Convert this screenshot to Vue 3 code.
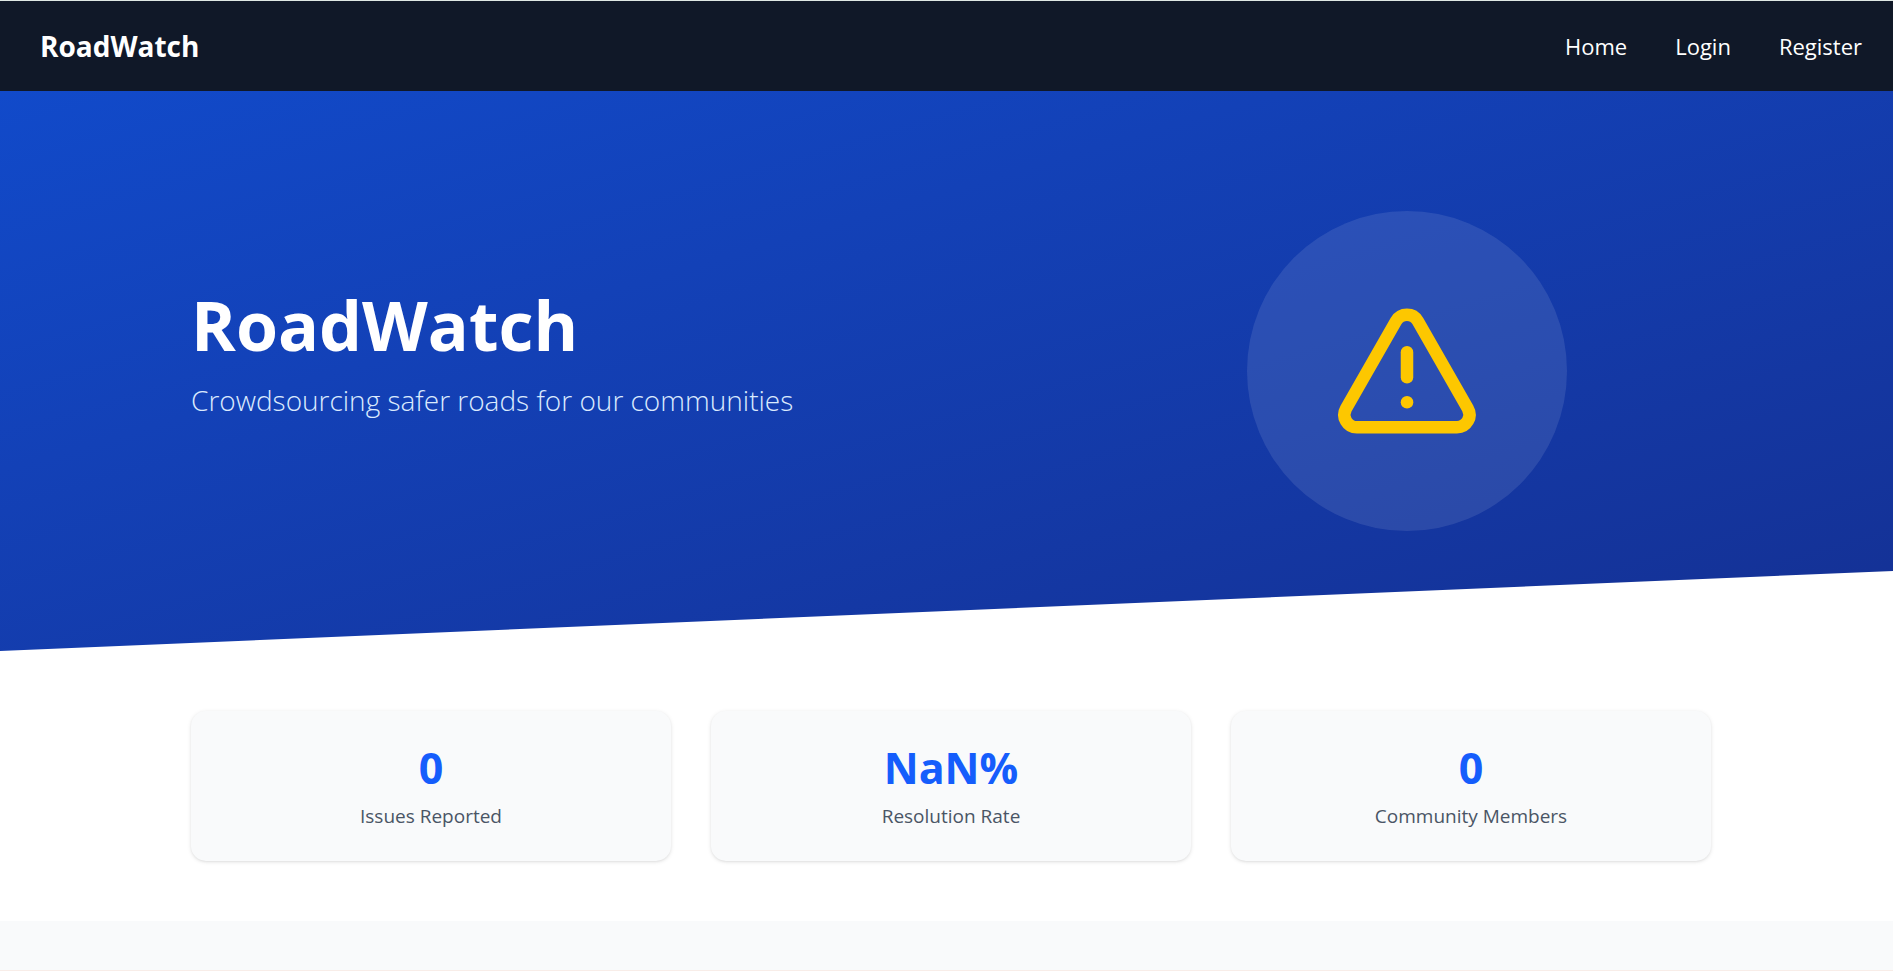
<script setup>
const links = [
  { label: 'Home', href: '#home' },
  { label: 'Login', href: '#login' },
  { label: 'Register', href: '#register' },
]

const stats = [
  { value: '0', label: 'Issues Reported' },
  { value: 'NaN%', label: 'Resolution Rate' },
  { value: '0', label: 'Community Members' },
]
</script>

<template>
  <div class="page">
    <header class="navbar">
      <a class="brand" href="#home">RoadWatch</a>
      <nav class="links">
        <a v-for="link in links" :key="link.label" :href="link.href">{{ link.label }}</a>
      </nav>
    </header>

    <main>
      <section class="hero">
        <div class="container hero-row">
          <div class="intro">
            <h1>RoadWatch</h1>
            <p>Crowdsourcing safer roads for our communities</p>
          </div>
          <div class="badge-column">
            <div class="badge">
              <svg viewBox="0 0 24 24" fill="none" stroke="currentColor" stroke-width="2" stroke-linecap="round" stroke-linejoin="round" aria-hidden="true">
                <path d="m21.73 18-8-14a2 2 0 0 0-3.48 0l-8 14A2 2 0 0 0 4 21h16a2 2 0 0 0 1.73-3" />
                <path d="M12 9v4" />
                <path d="M12 17h.01" />
              </svg>
            </div>
          </div>
        </div>
      </section>

      <section class="stats">
        <div class="container stats-grid">
          <div v-for="stat in stats" :key="stat.label" class="card">
            <div class="value">{{ stat.value }}</div>
            <div class="label">{{ stat.label }}</div>
          </div>
        </div>
      </section>

      <section class="next"></section>
    </main>
  </div>
</template>

<style>
body {
  margin: 0;
  background: #f9fafb;
}
</style>

<style scoped>
.page {
  font-family: "Segoe UI", "Open Sans", "Noto Sans", sans-serif;
  color: #fff;
}

.navbar {
  display: flex;
  align-items: center;
  justify-content: space-between;
  padding: 24px 31px 24px 40px;
  border-top: 1px solid #dfe8e4;
  background: #101828;
}

.navbar a {
  color: inherit;
  text-decoration: none;
}

.brand {
  font-size: 28px;
  line-height: 42px;
  font-weight: 700;
}

.links {
  display: flex;
  gap: 48px;
  font-size: 22px;
  line-height: 36px;
}

.container {
  max-width: 1520px;
  margin: 0 auto;
}

.hero {
  padding: 120px 31px 120px 40px;
  background: linear-gradient(to bottom right in oklab, #114aca, #143093);
  clip-path: polygon(0 0, 100% 0, 100% calc(100% - 80px), 0 100%);
}

.hero-row {
  display: flex;
  align-items: center;
}

.intro {
  width: 60%;
}

h1 {
  margin: 0 0 18px;
  font-size: 68px;
  line-height: 75px;
  font-weight: 700;
}

.intro p {
  margin: 0 0 36px;
  color: #dbeafe;
  font-size: 28px;
  line-height: 40px;
  font-weight: 300;
}

.badge-column {
  display: flex;
  justify-content: center;
  width: 40%;
}

.badge {
  display: flex;
  align-items: center;
  justify-content: center;
  width: 320px;
  height: 320px;
  border-radius: 50%;
  background: rgba(255, 255, 255, 0.1);
}

.badge svg {
  width: 150px;
  height: 150px;
  color: #fdc700;
}

main {
  background: #fff;
}

.stats {
  padding: 60px 31px 60px 40px;
}

.stats-grid {
  display: grid;
  grid-template-columns: repeat(3, 1fr);
  gap: 40px;
}

.card {
  padding: 30px;
  border-radius: 15px;
  background: #f9fafb;
  box-shadow: 0 1px 4px rgba(0, 0, 0, 0.1), 0 1px 3px -1px rgba(0, 0, 0, 0.1);
  text-align: center;
}

.value {
  margin-bottom: 6px;
  color: #155dfc;
  font-size: 43px;
  line-height: 54px;
  font-weight: 700;
}

.label {
  color: #4a5565;
  font-size: 19px;
  line-height: 30px;
}

.next {
  height: 49px;
  border-bottom: 1px solid #f8ede8;
  background: #f9fafb;
}
</style>
